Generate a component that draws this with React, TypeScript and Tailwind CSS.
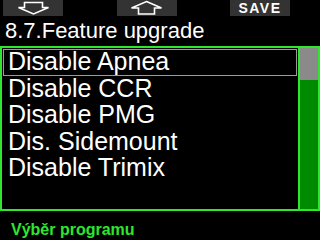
import React from "react"

const items = ["Disable Apnea", "Disable CCR", "Disable PMG", "Dis. Sidemount", "Disable Trimix"]

function DownArrow() {
  return (
    <svg width="60" height="16" viewBox="0 0 60 16">
      <polygon
        points="21.5,2.5 39.5,2.5 39.5,7.5 45.5,7.5 30.5,14 15.5,7.5 21.5,7.5"
        fill="none"
        stroke="#ffffff"
        strokeWidth="1.6"
        strokeLinejoin="miter"
      />
    </svg>
  )
}

function UpArrow() {
  return (
    <svg width="60" height="16" viewBox="0 0 60 16">
      <polygon
        points="29.5,1.5 44.5,8 37.5,8 37.5,14 21.5,14 21.5,8 14.5,8"
        fill="none"
        stroke="#ffffff"
        strokeWidth="1.6"
        strokeLinejoin="miter"
      />
    </svg>
  )
}

export default function App() {
  const selected = 0

  return (
    <div className="w-[320px] h-[240px] overflow-hidden bg-black text-white font-['Liberation_Sans',Arial,sans-serif]">
      {/* soft keys */}
      <div className="flex h-[16px]">
        <div className="ml-[3px] w-[60px] h-[16px] bg-[#333333]">
          <DownArrow />
        </div>
        <div className="ml-[54px] w-[60px] h-[16px] bg-[#333333]">
          <UpArrow />
        </div>
        <div className="ml-[53px] w-[60px] h-[16px] bg-[#333333] flex items-center justify-center text-[14px] leading-[16px] font-bold tracking-[1.5px]">
          SAVE
        </div>
      </div>

      {/* title */}
      <div className="mt-[4px] pl-[5px] text-[22px] leading-[22px] whitespace-nowrap">8.7.Feature upgrade</div>

      {/* list frame */}
      <div className="mt-[4px] flex h-[165px] border-2 border-[#2ee62e]">
        <div className="flex-1 p-[1px] border-r-2 border-[#2ee62e]">
          {items.map((item, i) => (
            <div
              key={item}
              className={
                i === selected
                  ? "h-[26.5px] pl-[4px] text-[25px] leading-[23px] whitespace-nowrap border border-[#9a9a9a]"
                  : "h-[26.5px] pl-[4px] text-[25px] leading-[23px] whitespace-nowrap border border-transparent"
              }
            >
              {item}
            </div>
          ))}
        </div>
        <div className="w-[18px] flex flex-col bg-[#008a00]">
          <div className="h-[32px] bg-[#8a8a8a]" />
        </div>
      </div>

      {/* footer */}
      <div className="mt-[11px] pl-[11px] text-[16px] leading-[16px] font-bold text-[#2ee62e] whitespace-nowrap">Výběr programu</div>
    </div>
  )
}
